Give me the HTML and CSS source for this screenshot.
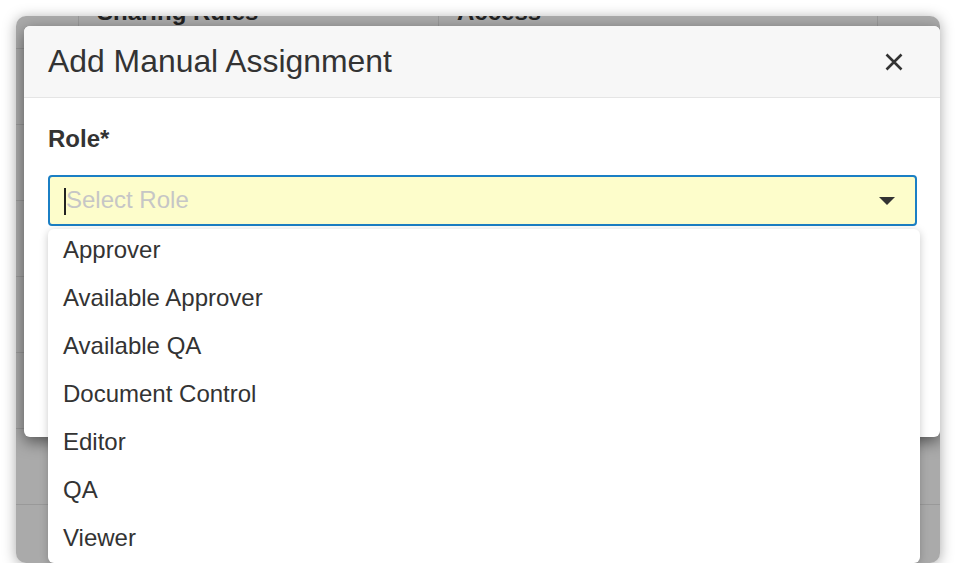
FILE: index.html
```html
<!DOCTYPE html>
<html>
<head>
<meta charset="utf-8">
<link rel="stylesheet" href="styles.css">
</head>
<body>
<div class="window">
  <div class="page-table">
    <div class="row head">
      <div class="cell"></div>
      <div class="cell">Sharing Rules</div>
      <div class="cell">Access</div>
      <div class="cell last"></div>
    </div>
    <div class="row"><div class="cell"></div><div class="cell"></div><div class="cell"></div><div class="cell last"></div></div>
    <div class="row"><div class="cell"></div><div class="cell"></div><div class="cell"></div><div class="cell last"></div></div>
    <div class="row"><div class="cell"></div><div class="cell"></div><div class="cell"></div><div class="cell last"></div></div>
    <div class="row"><div class="cell"></div><div class="cell"></div><div class="cell"></div><div class="cell last"></div></div>
    <div class="row"><div class="cell"></div><div class="cell"></div><div class="cell"></div><div class="cell last"></div></div>
    <div class="row"><div class="cell"></div><div class="cell"></div><div class="cell"></div><div class="cell last"></div></div>
    <div class="row"><div class="cell"></div><div class="cell"></div><div class="cell"></div><div class="cell last"></div></div>
  </div>
  <div class="backdrop"></div>
  <div class="modal">
    <div class="modal-header">
      <h4 class="modal-title">Add Manual Assignment</h4>
      <button class="close" type="button" aria-label="Close">
        <svg width="18" height="18" viewBox="0 0 18 18"><path d="M1.5 1.5 L16.5 16.5 M16.5 1.5 L1.5 16.5" stroke="#333" stroke-width="2.6" stroke-linecap="butt" fill="none"/></svg>
      </button>
    </div>
    <div class="modal-body">
      <div class="label">Role*</div>
      <div class="select">
        <div class="select-control">
          <span class="caret"></span>
          <span class="placeholder">Select Role</span>
          <span class="arrow"></span>
        </div>
        <ul class="menu">
          <li>Approver</li>
          <li>Available Approver</li>
          <li>Available QA</li>
          <li>Document Control</li>
          <li>Editor</li>
          <li>QA</li>
          <li>Viewer</li>
        </ul>
      </div>
    </div>
  </div>
</div>
</body>
</html>
```

FILE: styles.css
```css
html, body {
  margin: 0;
  padding: 0;
  background: #ffffff;
  font-family: "Liberation Sans", Arial, sans-serif;
  color: #333;
}

.window {
  position: relative;
  margin: 16px 0 0 16px;
  width: 924px;
  height: 547px;
  border-radius: 10px;
  overflow: hidden;
  background: #fff;
  box-shadow: 0 2px 14px rgba(0, 0, 0, 0.35);
}

.page-table {
  margin-top: -40px;
}

.row {
  display: grid;
  grid-template-columns: 63px 360px 439px 1fr;
  height: 76px;
  box-sizing: border-box;
  border-bottom: 1px solid #e6e6e6;
}

.row.head {
  height: 73px;
}

.cell {
  border-right: 1px solid #e6e6e6;
  padding: 22px 0 0 18px;
  font-size: 24px;
  line-height: 28px;
  font-weight: bold;
  color: #333;
}

.cell.last {
  border-right: none;
}

.backdrop {
  position: absolute;
  inset: 0;
  background: rgba(0, 0, 0, 0.335);
}

.modal {
  position: absolute;
  left: 8px;
  top: 10px;
  width: 916px;
  height: 411px;
  background: #fff;
  border-radius: 6px;
  box-shadow: 0 5px 15px rgba(0, 0, 0, 0.5);
}

.modal-header {
  height: 71px;
  box-sizing: content-box;
  background: #f7f7f7;
  border-bottom: 1px solid #e5e5e5;
  border-radius: 6px 6px 0 0;
  display: flex;
  align-items: center;
  justify-content: space-between;
  padding: 0 37px 0 24px;
}

.modal-title {
  margin: 0;
  font-size: 31.9px;
  font-weight: normal;
  line-height: 1.15;
  color: #333;
}

.close {
  border: none;
  background: none;
  padding: 0;
  width: 18px;
  height: 18px;
  display: flex;
}

.modal-body {
  padding: 27px 23px 0 24px;
}

.label {
  font-size: 24px;
  font-weight: bold;
  line-height: 28.8px;
  color: #333;
  margin-bottom: 21px;
}

.select {
  position: relative;
}

.select-control {
  height: 51px;
  box-sizing: border-box;
  border: 2px solid #1b7fc4;
  border-radius: 4px;
  background: #fdfdcb;
  display: flex;
  align-items: center;
  padding: 0 20px 0 14px;
}

.caret {
  width: 2px;
  height: 27px;
  background: #222;
  margin-top: 2px;
}

.placeholder {
  flex: 1;
  font-size: 24px;
  color: #c6c6c6;
}

.arrow {
  width: 0;
  height: 0;
  border-left: 8px solid transparent;
  border-right: 8px solid transparent;
  border-top: 8px solid #333;
  margin-top: 1px;
}

.menu {
  position: absolute;
  top: calc(100% + 3px);
  left: 0;
  width: calc(100% + 3px);
  height: 334px;
  overflow: hidden;
  margin: 0;
  padding: 0;
  list-style: none;
  background: #fff;
  border-radius: 6px;
  box-shadow: 0 2px 8px rgba(0, 0, 0, 0.22);
}

.menu li {
  height: 48px;
  box-sizing: border-box;
  padding: 0 0 6px 15px;
  line-height: 42px;
  font-size: 24px;
  color: #333;
}
```
